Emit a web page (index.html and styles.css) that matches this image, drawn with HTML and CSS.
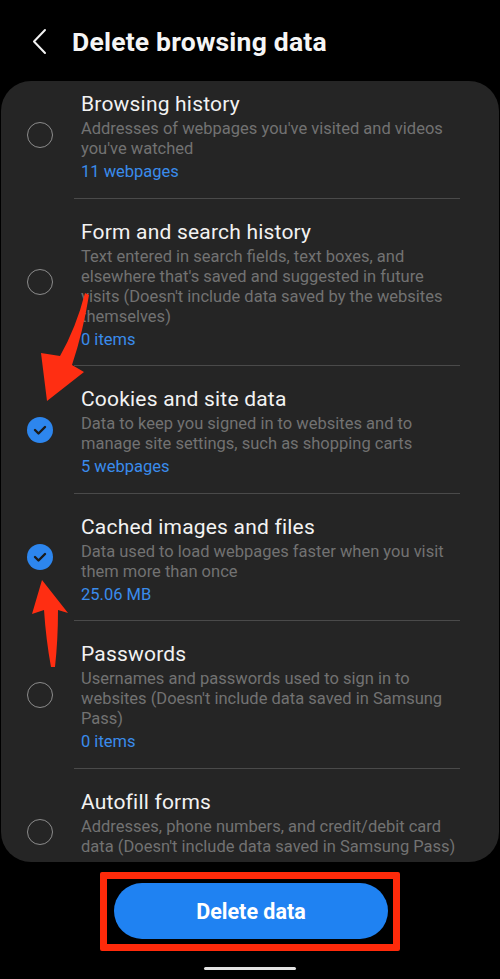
FILE: index.html
```html
<!DOCTYPE html>
<html lang="en">
<head>
  <meta charset="UTF-8" />
  <meta name="viewport" content="width=device-width, initial-scale=1.0"/>
  <title>Delete browsing data</title>
  <link rel="stylesheet" href="styles.css">
</head>
<body>

  <header class="topbar">
    <svg class="back" width="16" height="28" viewBox="0 0 16 28">
      <polyline points="13,2 2,13.5 13,25" fill="none" stroke="#f2f2f2" stroke-width="2" stroke-linecap="round" stroke-linejoin="round"/>
    </svg>
    <h1>Delete browsing data</h1>
  </header>

  <div class="card">
    <div class="list">

      <div class="item">
        <span class="check"></span>
        <div class="item-body">
          <div class="item-title">Browsing history</div>
          <div class="item-desc">Addresses of webpages you've visited and videos you've watched</div>
          <div class="item-count">11 webpages</div>
        </div>
      </div>

      <div class="item">
        <span class="check"></span>
        <div class="item-body">
          <div class="item-title">Form and search history</div>
          <div class="item-desc">Text entered in search fields, text boxes, and elsewhere that's saved and suggested in future visits (Doesn't include data saved by the websites themselves)</div>
          <div class="item-count">0 items</div>
        </div>
      </div>

      <div class="item">
        <span class="check checked">
          <svg width="26" height="26" viewBox="0 0 26 26"><polyline points="8,13 11.5,16.5 18,10" fill="none" stroke="#1b1b1b" stroke-width="2.4" stroke-linecap="round" stroke-linejoin="round"/></svg>
        </span>
        <div class="item-body">
          <div class="item-title">Cookies and site data</div>
          <div class="item-desc">Data to keep you signed in to websites and to manage site settings, such as shopping carts</div>
          <div class="item-count">5 webpages</div>
        </div>
      </div>

      <div class="item">
        <span class="check checked">
          <svg width="26" height="26" viewBox="0 0 26 26"><polyline points="8,13 11.5,16.5 18,10" fill="none" stroke="#1b1b1b" stroke-width="2.4" stroke-linecap="round" stroke-linejoin="round"/></svg>
        </span>
        <div class="item-body">
          <div class="item-title">Cached images and files</div>
          <div class="item-desc">Data used to load webpages faster when you visit them more than once</div>
          <div class="item-count">25.06 MB</div>
        </div>
      </div>

      <div class="item">
        <span class="check"></span>
        <div class="item-body">
          <div class="item-title">Passwords</div>
          <div class="item-desc">Usernames and passwords used to sign in to websites (Doesn't include data saved in Samsung Pass)</div>
          <div class="item-count">0 items</div>
        </div>
      </div>

      <div class="item">
        <span class="check"></span>
        <div class="item-body">
          <div class="item-title">Autofill forms</div>
          <div class="item-desc">Addresses, phone numbers, and credit/debit card data (Doesn't include data saved in Samsung Pass)</div>
          <div class="item-count">0 items</div>
        </div>
      </div>

    </div>
  </div>

  <div class="footer">
    <div class="highlight">
      <button class="delete-btn">Delete data</button>
    </div>
    <div class="home-bar"></div>
  </div>

  <!-- red pointer arrows drawn on top of the list -->
  <svg class="arrows" width="500" height="979" viewBox="0 0 500 979">
    <path d="M85,293 Q76,328 60,356 L41,353 L47,401 L84,372 L72,365 Q83,332 89,295 Z" fill="#ff2e12"/>
    <path d="M42,580 L32,614 L44,610 Q46,640 51,667 L55,667 Q58,640 58,610 L68,613 Z" fill="#ff2e12"/>
  </svg>

</body>
</html>
```

FILE: styles.css
```css
body {
  font-family: Roboto, "Noto Sans", sans-serif;
  background: #000;
  margin: 0;
  width: 500px;
  height: 979px;
  overflow: hidden;
  position: relative;
  color: #f2f2f2;
}

.topbar {
  height: 81px;
  display: flex;
  align-items: center;
  padding-left: 32px;
  box-sizing: border-box;
  padding-top: 2px;
}

.topbar h1 {
  margin: 0 0 0 24px;
  font-size: 26.5px;
  font-weight: 700;
  color: #f5f5f5;
  letter-spacing: 0.2px;
}

.card {
  background: #252525;
  margin: 0 1px;
  height: 781px;
  border-radius: 30px;
  overflow: hidden;
}

/* list is scrolled a little, first row sits under the card top */
.list {
  margin-top: -10px;
}

.item {
  display: flex;
  align-items: center;
}

.check {
  flex: none;
  width: 26px;
  height: 26px;
  margin-left: 26px;
  border: 1.5px solid #8c8c8c;
  border-radius: 50%;
  box-sizing: border-box;
}

.check.checked {
  background: #2d86ee;
  border: none;
}

.check svg {
  display: block;
}

.item-body {
  flex: 1;
  margin: 0 39px 0 21px;
  padding: 20px 0 14.5px 7px;
  border-bottom: 1px solid #4a4a4a;
}

.item-title {
  font-size: 21px;
  line-height: 26px;
  color: #f2f2f2;
  letter-spacing: 0.2px;
}

.item-desc {
  margin-top: 2px;
  font-size: 16.5px;
  line-height: 20px;
  color: #727272;
}

.item-count {
  margin-top: 2px;
  font-size: 16.5px;
  line-height: 22px;
  color: #3a8cec;
}

.footer {
  display: flex;
  flex-direction: column;
  align-items: center;
  padding-top: 10px;
}

.highlight {
  border: 7px solid #ff2a0a;
  padding: 4px 5px 5px 7px;
  border-radius: 2px;
}

.delete-btn {
  display: block;
  width: 274px;
  height: 56px;
  border: none;
  border-radius: 28px;
  background: #1f82f2;
  color: #fff;
  font-family: Roboto, "Noto Sans", sans-serif;
  font-size: 21.5px;
  font-weight: 700;
  cursor: pointer;
}

.home-bar {
  width: 92px;
  height: 3px;
  margin-top: 16px;
  border-radius: 2px;
  background: #e2e2e2;
}

.arrows {
  position: absolute;
  top: 0;
  left: 0;
  pointer-events: none;
}
```
